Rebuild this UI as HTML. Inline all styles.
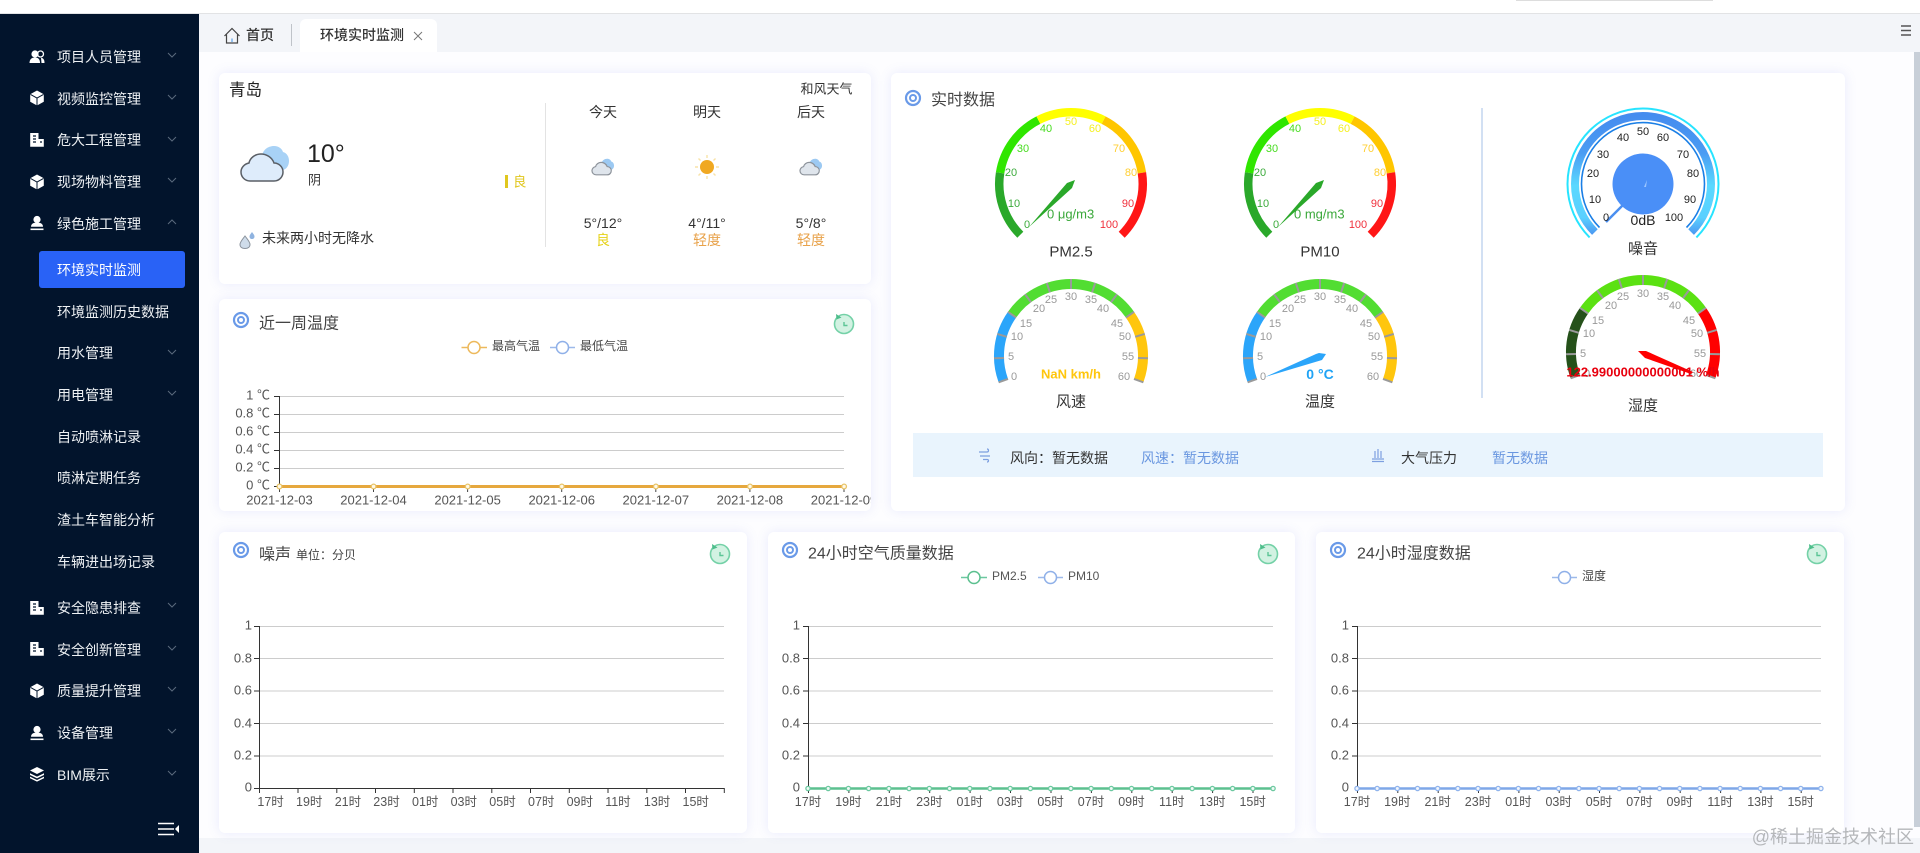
<!DOCTYPE html>
<html lang="zh-CN">
<head>
<meta charset="utf-8">
<title>环境实时监测</title>
<style>
html,body{margin:0;padding:0;width:1920px;height:853px;overflow:hidden;background:#fff}
.a{position:absolute}
.card{position:absolute;background:#fff;border-radius:6px;box-shadow:0 0 12px rgba(90,110,230,.13)}
svg{position:absolute;left:0;top:0;font-family:"Liberation Sans","Noto Sans CJK SC",sans-serif}
text{dominant-baseline:central}
.s text{font-size:14px;fill:#eef1f4}
.m{text-anchor:middle}
.e{text-anchor:end}
.t{font-size:16px;fill:#444}
.yl text{font-size:13px;fill:#555;text-anchor:end}
.xl text{font-size:12.5px;fill:#555}
.grid{stroke:#ccc;stroke-width:1}
.ax{stroke:#333;stroke-width:1;fill:none}
.g12 text{font-size:11px;text-anchor:middle}
.gw text{font-size:11px;text-anchor:middle;fill:#999}
</style>
</head>
<body>
<div class="a" style="left:0;top:0;width:1920px;height:13px;background:#fff"></div>
<div class="a" style="left:1516px;top:0;width:197px;height:1px;background:#ddd"></div>
<div class="a" style="left:0;top:13px;width:1920px;height:1px;background:#e2e3e5"></div>
<div class="a" style="left:199px;top:14px;width:1721px;height:38px;background:#f3f5f9"></div>
<div class="a" style="left:199px;top:52px;width:1721px;height:786px;background:#fdfdff"></div>
<div class="a" style="left:199px;top:838px;width:1721px;height:15px;background:#f3f5f9"></div>
<div class="a" style="left:0;top:14px;width:199px;height:839px;background:#02142c"></div>
<div class="a" style="left:300px;top:19px;width:137px;height:33px;background:#fff;border-radius:6px 6px 0 0"></div>
<div class="a" style="left:39px;top:251px;width:146px;height:37px;background:#2962f6;border-radius:3px"></div>
<div class="a" style="left:1914px;top:52px;width:6px;height:775px;background:#c8cfd8"></div>
<div class="card" style="left:219px;top:73px;width:652px;height:211px"></div>
<div class="card" style="left:219px;top:299px;width:652px;height:212px"></div>
<div class="card" style="left:891px;top:73px;width:954px;height:438px"></div>
<div class="card" style="left:219px;top:532px;width:528px;height:301px"></div>
<div class="card" style="left:768px;top:532px;width:527px;height:301px"></div>
<div class="card" style="left:1316px;top:532px;width:528px;height:301px"></div>

<svg width="1920" height="853" viewBox="0 0 1920 853" xmlns="http://www.w3.org/2000/svg">
<defs>
<g id="cube"><path d="M0 -7.5L6.8 -3.8V3.8L0 7.5L-6.8 3.8V-3.8Z" fill="#fff"/><path d="M-6.5 -3.6L0 0L6.5 -3.6M0 0V7.5" stroke="#02142c" stroke-width="1" fill="none"/></g>
<g id="bld"><path d="M-6.8 -7H1.5V-1H6.8V6.8H-6.8Z" fill="#fff"/><path d="M-4 -4H-1M-4 -1H-1M-4 2H-1M3 2H5" stroke="#02142c" stroke-width="1.2"/></g>
<g id="person"><circle cx="0" cy="-3.5" r="3.6" fill="#fff"/><path d="M-6 3.8C-6 0.5 -3 -.5 0 -.5C3 -.5 6 .5 6 3.8Z" fill="#fff"/><path d="M-6.5 6.3H6.5" stroke="#fff" stroke-width="1.6"/></g>
<g id="people"><circle cx="-2" cy="-3" r="3.6" fill="#fff"/><path d="M-7.5 6C-7.5 2 -5 .5 -2 .5C1 .5 3 2 3 6Z" fill="#fff"/><circle cx="3.5" cy="-3" r="3" fill="none" stroke="#fff" stroke-width="1.3"/><path d="M4 .8C6.5 1.2 7.5 3 7.5 6H4.5" fill="#fff"/></g>
<g id="layers"><path d="M0 -7L7 -3.5L0 0L-7 -3.5Z" fill="#fff"/><path d="M-7 -.8L0 2.6L7 -.8V1L0 4.4L-7 1Z" fill="#fff"/><path d="M-7 2.6L0 6L7 2.6V4.2L0 7.6L-7 4.2Z" fill="#fff"/></g>
<g id="ring"><circle r="7" fill="none" stroke="#6a9ae8" stroke-width="2.2"/><circle r="3" fill="none" stroke="#6a9ae8" stroke-width="2"/></g>
<g id="rf"><circle r="9.5" fill="#d2f2e2" stroke="#74d1a7" stroke-width="1.6"/><path d="M-8 -10L-7.5 -4.5L-2.5 -6.5Z" fill="#4dbd8b"/><path d="M0 -2V1.5H3.5" stroke="#5cc596" stroke-width="1.4" fill="none"/></g>
<g id="bigcloud"><path d="M262 156C263 149 269 146 274 146C279 146 282 149 283 152C287 153 289 157 289 161C289 166 286 170 282 170H270Z" fill="#a8d2f6"/><path d="M250 181H274C280 181 283 176 283 172C283 167 279 163 274 163C272 157 266 154 261 154C255 154 250 158 249 163C244 164 241 168 241 172C241 177 245 181 250 181Z" fill="#deecfb" stroke="#5a5f66" stroke-width="1.5"/></g>
<g id="smcloud"><path d="M262 156C263 149 269 146 274 146C279 146 282 149 283 152C287 153 289 157 289 161C289 166 286 170 282 170H270Z" fill="#9cc9f2"/><path d="M250 181H274C280 181 283 176 283 172C283 167 279 163 274 163C272 157 266 154 261 154C255 154 250 158 249 163C244 164 241 168 241 172C241 177 245 181 250 181Z" fill="#dfe5ec" stroke="#8d939b" stroke-width="2.6"/></g>
<g id="wticks" stroke="#9a9a9a" stroke-width="2">
<line x1="67" x2="77" transform="rotate(-200)"/><line x1="67" x2="77" transform="rotate(-181.67)"/><line x1="67" x2="77" transform="rotate(-163.33)"/><line x1="67" x2="77" transform="rotate(-145)"/><line x1="67" x2="77" transform="rotate(-126.67)"/><line x1="67" x2="77" transform="rotate(-108.33)"/><line x1="67" x2="77" transform="rotate(-90)"/><line x1="67" x2="77" transform="rotate(-71.67)"/><line x1="67" x2="77" transform="rotate(-53.33)"/><line x1="67" x2="77" transform="rotate(-35)"/><line x1="67" x2="77" transform="rotate(-16.67)"/><line x1="67" x2="77" transform="rotate(1.67)"/><line x1="67" x2="77" transform="rotate(20)"/>
</g>
<g id="pmarc" fill="none" stroke-width="8.5">
<path d="M-50.7 50.7A71.75 71.75 0 0 1 -70.9 -11.2" stroke="#2aa82a"/>
<path d="M-70.9 -11.2A71.75 71.75 0 0 1 -32.6 -63.9" stroke="#2fe600"/>
<path d="M-32.6 -63.9A71.75 71.75 0 0 1 32.6 -63.9" stroke="#ffff00"/>
<path d="M32.6 -63.9A71.75 71.75 0 0 1 70.9 -11.2" stroke="#ffc600"/>
<path d="M70.9 -11.2A71.75 71.75 0 0 1 50.7 50.7" stroke="#ff1616"/>
</g>
<linearGradient id="bandg" gradientUnits="userSpaceOnUse" x1="0" y1="108" x2="0" y2="237">
<stop offset="0" stop-color="#4489ee"/><stop offset=".35" stop-color="#4a9cf3"/><stop offset=".6" stop-color="#5ad8ff"/><stop offset=".85" stop-color="#5ad0ff"/><stop offset="1" stop-color="#4a8ff0"/>
</linearGradient>
<clipPath id="c1"><rect x="219" y="299" width="652" height="212"/></clipPath>
</defs>

<!-- sidebar -->
<g class="s">
<text x="57" y="57">项目人员管理</text>
<text x="57" y="99">视频监控管理</text>
<text x="57" y="140">危大工程管理</text>
<text x="57" y="182">现场物料管理</text>
<text x="57" y="224">绿色施工管理</text>
<text x="57" y="270" style="fill:#fff">环境实时监测</text>
<text x="57" y="312">环境监测历史数据</text>
<text x="57" y="353">用水管理</text>
<text x="57" y="395">用电管理</text>
<text x="57" y="437">自动喷淋记录</text>
<text x="57" y="478">喷淋定期任务</text>
<text x="57" y="520">渣土车智能分析</text>
<text x="57" y="562">车辆进出场记录</text>
<text x="57" y="608">安全隐患排查</text>
<text x="57" y="650">安全创新管理</text>
<text x="57" y="691">质量提升管理</text>
<text x="57" y="733">设备管理</text>
<text x="57" y="775">BIM展示</text>
</g>
<use href="#people" x="37" y="57"/><use href="#cube" x="37" y="98"/><use href="#bld" x="37" y="140"/><use href="#cube" x="37" y="182"/><use href="#person" x="37" y="223"/>
<use href="#bld" x="37" y="608"/><use href="#bld" x="37" y="649"/><use href="#cube" x="37" y="691"/><use href="#person" x="37" y="733"/><use href="#layers" x="37" y="774"/>
<g fill="none" stroke="#5a6a7d" stroke-width="1">
<path d="M168 53l4 4l4 -4M168 95l4 4l4 -4M168 137l4 4l4 -4M168 178l4 4l4 -4M168 224l4 -4l4 4M168 350l4 4l4 -4M168 391l4 4l4 -4M168 603l4 4l4 -4M168 646l4 4l4 -4M168 687l4 4l4 -4M168 729l4 4l4 -4M168 771l4 4l4 -4"/>
</g>
<path d="M158 823.5H174M158 829H174M158 834.5H174" stroke="#fff" stroke-width="1.6"/>
<path d="M179 825V833L175 829Z" fill="#fff"/>

<!-- tabs -->
<path d="M224.5 36L232 28.5L239.5 36M226.5 34.5V43H237.5V34.5" fill="none" stroke="#444" stroke-width="1.2"/>
<path d="M232 38.5V42" stroke="#3a8ee6" stroke-width="1"/>
<text x="246" y="35" font-size="14" fill="#333" font-weight="500">首页</text>
<path d="M291.5 24V46" stroke="#bfc3c9"/>
<text x="320" y="35" font-size="14" fill="#333" font-weight="500">环境实时监测</text>
<path d="M414 32L422 40M422 32L414 40" stroke="#777" stroke-width="1"/>
<path d="M1901 26H1911M1901 30.5H1911M1901 35H1911" stroke="#555" stroke-width="1.6"/>

<!-- weather -->
<text x="229" y="90.5" font-size="16.5" fill="#222">青岛</text>
<text x="800.5" y="89" font-size="13" fill="#333">和风天气</text>
<path d="M545.5 103V247" stroke="#e3e3e3"/>
<use href="#bigcloud"/>
<text x="307" y="154" font-size="25" fill="#222">10°</text>
<text x="308" y="180" font-size="13" fill="#333">阴</text>
<rect x="505" y="175" width="3" height="13" fill="#e0c71e"/>
<text x="513" y="182" font-size="13.5" fill="#e0c71e">良</text>
<path d="M245 236C242 240 240 242 240 244.5C240 247 242 248.5 245 248.5C248 248.5 250 247 250 244.5C250 242 248 240 245 236Z" fill="#cfdcea" stroke="#8b939d" stroke-width="1"/>
<path d="M252 232C250.5 234 249.5 235 249.5 236.5C249.5 238 250.5 239 252 239C253.5 239 254.5 238 254.5 236.5C254.5 235 253.5 234 252 232Z" fill="#8fb3e0"/>
<text x="262" y="238" font-size="14" fill="#333">未来两小时无降水</text>
<text x="603" y="112" class="m" font-size="14" fill="#333">今天</text>
<text x="707" y="112" class="m" font-size="14" fill="#333">明天</text>
<text x="811" y="112" class="m" font-size="14" fill="#333">后天</text>
<use href="#smcloud" transform="translate(603,167) scale(.46) translate(-265,-164)"/>
<use href="#smcloud" transform="translate(811,167) scale(.46) translate(-265,-164)"/>
<circle cx="707" cy="167" r="7" fill="#f0a821"/>
<g stroke="#f8e3a8" stroke-width="1.4"><path d="M707 155V158M707 176V179M695 167H698M716 167H719M698.5 158.5L700.5 160.5M713.5 173.5L715.5 175.5M698.5 175.5L700.5 173.5M713.5 160.5L715.5 158.5"/></g>
<text x="603" y="223" class="m" font-size="14" fill="#333">5°/12°</text>
<text x="707" y="223" class="m" font-size="14" fill="#333">4°/11°</text>
<text x="811" y="223" class="m" font-size="14" fill="#333">5°/8°</text>
<text x="603" y="240" class="m" font-size="14" fill="#e6d21a">良</text>
<text x="707" y="240" class="m" font-size="14" fill="#e8a24a">轻度</text>
<text x="811" y="240" class="m" font-size="14" fill="#e8a24a">轻度</text>

<!-- week temp -->
<use href="#ring" x="241" y="320"/>
<text x="259" y="324" class="t">近一周温度</text>
<use href="#rf" x="844" y="324"/>
<g fill="none" stroke-width="1.5">
<path d="M461.5 347.5H487" stroke="#edb95c"/><circle cx="474" cy="347.5" r="6" fill="#fff" stroke="#edb95c"/>
<path d="M550 347.5H575" stroke="#9db9ea"/><circle cx="562.5" cy="347.5" r="6" fill="#fff" stroke="#8fb0e8"/>
</g>
<text x="492" y="346" font-size="12" fill="#444">最高气温</text>
<text x="580" y="346" font-size="12" fill="#444">最低气温</text>
<path class="grid" d="M279.5 396.5H844M279.5 414.5H844M279.5 432.5H844M279.5 450.5H844M279.5 468.5H844"/>
<path class="ax" d="M279.5 396V487M274 396.5H279.5M274 414.5H279.5M274 432.5H279.5M274 450.5H279.5M274 468.5H279.5M274 486.5H279.5"/>
<path d="M279.5 487V492M373.5 487V492M467.6 487V492M561.7 487V492M655.8 487V492M749.9 487V492M844 487V492" stroke="#444"/>
<line x1="279.5" y1="486.5" x2="844" y2="486.5" stroke="#e6a83e" stroke-width="3"/>
<line x1="279.5" y1="486.5" x2="844.2" y2="486.5" stroke="#e8c468" stroke-width="6" stroke-linecap="round" stroke-dasharray="0 94.1"/>
<line x1="279.5" y1="486.5" x2="844.2" y2="486.5" stroke="#fff8e6" stroke-width="3.4" stroke-linecap="round" stroke-dasharray="0 94.1"/>
<g class="yl">
<text x="270" y="395">1 ℃</text><text x="270" y="413">0.8 ℃</text><text x="270" y="431">0.6 ℃</text><text x="270" y="449">0.4 ℃</text><text x="270" y="467">0.2 ℃</text><text x="270" y="485">0 ℃</text>
</g>
<g clip-path="url(#c1)" font-size="13" fill="#555" text-anchor="middle">
<text x="279.5" y="500">2021-12-03</text><text x="373.5" y="500">2021-12-04</text><text x="467.6" y="500">2021-12-05</text><text x="561.7" y="500">2021-12-06</text><text x="655.8" y="500">2021-12-07</text><text x="749.9" y="500">2021-12-08</text><text x="844" y="500">2021-12-09</text>
</g>

<!-- realtime -->
<use href="#ring" x="913" y="98"/>
<text x="931" y="100.5" class="t">实时数据</text>
<use href="#pmarc" x="1071" y="184"/>
<use href="#pmarc" x="1320" y="184"/>
<g class="g12">
<g fill="#3cab3c"><text x="1027" y="225">0</text><text x="1014" y="204">10</text><text x="1011" y="173">20</text></g>
<g fill="#47dc1f"><text x="1023" y="149">30</text><text x="1046" y="129">40</text></g>
<g fill="#f5f021"><text x="1071" y="122">50</text><text x="1095" y="129">60</text></g>
<g fill="#ffcf33"><text x="1119" y="149">70</text><text x="1131" y="173">80</text></g>
<g fill="#f0303c"><text x="1128" y="204">90</text><text x="1109" y="225">100</text></g>
<g fill="#3cab3c"><text x="1276" y="225">0</text><text x="1263" y="204">10</text><text x="1260" y="173">20</text></g>
<g fill="#47dc1f"><text x="1272" y="149">30</text><text x="1295" y="129">40</text></g>
<g fill="#f5f021"><text x="1320" y="122">50</text><text x="1344" y="129">60</text></g>
<g fill="#ffcf33"><text x="1368" y="149">70</text><text x="1380" y="173">80</text></g>
<g fill="#f0303c"><text x="1377" y="204">90</text><text x="1358" y="225">100</text></g>
</g>
<polygon points="1029,227 1067,183 1075,180 1072,188" fill="#2aa82a"/>
<polygon points="1278,227 1316,183 1324,180 1321,188" fill="#2aa82a"/>
<text x="1047" y="214" font-size="13" fill="#3aa83a" font-weight="500">0 μg/m3</text>
<text x="1294" y="214" font-size="13" fill="#3aa83a" font-weight="500">0 mg/m3</text>
<text x="1071" y="252" class="m" font-size="15" fill="#333">PM2.5</text>
<text x="1320" y="252" class="m" font-size="15" fill="#333">PM10</text>

<!-- wind -->
<g fill="none" stroke-width="10" transform="translate(1071,356)">
<path d="M-67.7 24.6A72 72 0 0 1 -59 -41.3" stroke="#2ba5fa"/>
<path d="M-59 -41.3A72 72 0 0 1 59 -41.3" stroke="#52dd32"/>
<path d="M59 -41.3A72 72 0 0 1 67.7 24.6" stroke="#ffc60d"/>
</g>
<use href="#wticks" x="1071" y="356"/>
<g class="gw">
<text x="1014" y="377">0</text><text x="1011" y="357">5</text><text x="1017" y="337">10</text><text x="1026" y="324">15</text><text x="1039" y="309">20</text><text x="1051" y="300">25</text><text x="1071" y="297">30</text><text x="1091" y="300">35</text><text x="1103" y="309">40</text><text x="1117" y="324">45</text><text x="1125" y="337">50</text><text x="1128" y="357">55</text><text x="1124" y="377">60</text>
</g>
<text x="1071" y="374" class="m" font-size="13" font-weight="700" fill="#ffc60d">NaN km/h</text>
<text x="1071" y="402" class="m" font-size="15" fill="#333">风速</text>

<!-- temp -->
<g fill="none" stroke-width="10" transform="translate(1320,356)">
<path d="M-67.7 24.6A72 72 0 0 1 -59 -41.3" stroke="#2ba5fa"/>
<path d="M-59 -41.3A72 72 0 0 1 59 -41.3" stroke="#52dd32"/>
<path d="M59 -41.3A72 72 0 0 1 67.7 24.6" stroke="#ffc60d"/>
</g>
<use href="#wticks" x="1320" y="356"/>
<g class="gw">
<text x="1263" y="377">0</text><text x="1260" y="357">5</text><text x="1266" y="337">10</text><text x="1275" y="324">15</text><text x="1288" y="309">20</text><text x="1300" y="300">25</text><text x="1320" y="297">30</text><text x="1340" y="300">35</text><text x="1352" y="309">40</text><text x="1366" y="324">45</text><text x="1374" y="337">50</text><text x="1377" y="357">55</text><text x="1373" y="377">60</text>
</g>
<polygon points="1265,377 1316,354 1319,353 1326,354 1322,360" fill="#2ba5fa"/>
<text x="1320" y="374" class="m" font-size="14" font-weight="700" fill="#1fa3f5">0 °C</text>
<text x="1320" y="402" class="m" font-size="15" fill="#333">温度</text>

<!-- divider -->
<rect x="1481" y="108" width="2" height="290" fill="#d2e0f3"/>

<!-- noise -->
<g fill="none">
<path d="M1589.6 237.4A75.5 75.5 0 1 1 1696.4 237.4" stroke="#27e4ff" stroke-width="2"/>
<path d="M1594.9 232.1A68 68 0 1 1 1691.1 232.1" stroke="url(#bandg)" stroke-width="8"/>
<path d="M1599.5 227.5A61.5 61.5 0 1 1 1686.5 227.5" stroke="#1a7fe6" stroke-width="1.6"/>
</g>
<path d="M1606 222L1625 203" stroke="#4a8ff0" stroke-width="2.5"/>
<circle cx="1643" cy="184" r="30.5" fill="#4a8ff7"/>
<path d="M1644 187L1647 180L1646 187Z" fill="#9cc6ff"/>
<g font-size="11" fill="#222" text-anchor="middle">
<text x="1606" y="218">0</text><text x="1595" y="200">10</text><text x="1593" y="174">20</text><text x="1603" y="155">30</text><text x="1623" y="138">40</text><text x="1643" y="132">50</text><text x="1663" y="138">60</text><text x="1683" y="155">70</text><text x="1693" y="174">80</text><text x="1690" y="200">90</text><text x="1674" y="218">100</text>
</g>
<text x="1643" y="220" class="m" font-size="14" fill="#222">0dB</text>
<text x="1643" y="249" class="m" font-size="15" fill="#333">噪音</text>

<!-- humidity -->
<g fill="none" stroke-width="10" transform="translate(1643,352)">
<path d="M-67.7 24.6A72 72 0 0 1 -59 -41.3" stroke="#25511a"/>
<path d="M-59 -41.3A72 72 0 0 1 59 -41.3" stroke="#5be112"/>
<path d="M59 -41.3A72 72 0 0 1 67.7 24.6" stroke="#ff0000"/>
</g>
<use href="#wticks" x="1643" y="352"/>
<g class="gw">
<text x="1587" y="374">0</text><text x="1583" y="354">5</text><text x="1589" y="334">10</text><text x="1598" y="321">15</text><text x="1611" y="306">20</text><text x="1623" y="297">25</text><text x="1643" y="294">30</text><text x="1663" y="297">35</text><text x="1675" y="306">40</text><text x="1689" y="321">45</text><text x="1697" y="334">50</text><text x="1700" y="354">55</text><text x="1696" y="374">60</text>
</g>
<polygon points="1638,351 1646,351 1693,372 1691,374 1645,358" fill="#ff0000"/>
<text x="1643" y="372" class="m" font-size="13" font-weight="700" fill="#e8000e">122.99000000000001 %/h</text>
<text x="1643" y="406" class="m" font-size="15" fill="#333">湿度</text>

<!-- strip -->
<rect x="913" y="433" width="910" height="44" fill="#e9f4fd"/>
<path d="M979 452H987C989 452 989 449 987 449M980 456H990M983 459.5H987C989 459.5 989 462 987 462" fill="none" stroke="#7d9fe0" stroke-width="1.2"/>
<text x="1010" y="458" font-size="14" fill="#333">风向：暂无数据</text>
<text x="1141" y="458" font-size="14" fill="#6a97e0">风速：暂无数据</text>
<path d="M1375 451V458M1378 449V458M1381 451V458M1372 459H1384M1372 461.5H1384" fill="none" stroke="#7d9fe0" stroke-width="1.2"/>
<text x="1401" y="458" font-size="14" fill="#333">大气压力</text>
<text x="1492" y="458" font-size="14" fill="#6a97e0">暂无数据</text>

<!-- noise chart -->
<use href="#ring" x="241" y="550"/>
<text x="259" y="555" class="t">噪声</text>
<text x="296" y="555" font-size="12" fill="#444">单位：分贝</text>
<use href="#rf" x="720" y="554"/>
<path class="grid" d="M259.5 626.5H724M259.5 658.5H724M259.5 691H724M259.5 723.5H724M259.5 756H724"/>
<path class="ax" d="M259.5 626V789M254 626.5H259.5M254 658.5H259.5M254 691H259.5M254 723.5H259.5M254 756H259.5M254 788.5H724.5"/>
<path class="ax" d="M259.5 788V793M298 788V793M336.8 788V793M375.5 788V793M414.3 788V793M453 788V793M491.8 788V793M530.5 788V793M569.3 788V793M608 788V793M646.8 788V793M685.5 788V793M724.3 788V793"/>
<g class="yl"><text x="252" y="625">1</text><text x="252" y="658">0.8</text><text x="252" y="690">0.6</text><text x="252" y="723">0.4</text><text x="252" y="755">0.2</text><text x="252" y="787">0</text></g>
<g class="xl"><text x="257.4" y="802">17时</text><text x="296" y="802">19时</text><text x="334.7" y="802">21时</text><text x="373.3" y="802">23时</text><text x="412" y="802">01时</text><text x="450.6" y="802">03时</text><text x="489.3" y="802">05时</text><text x="528" y="802">07时</text><text x="566.6" y="802">09时</text><text x="605.2" y="802">11时</text><text x="643.9" y="802">13时</text><text x="682.5" y="802">15时</text></g>

<!-- aqi chart -->
<use href="#ring" x="790" y="550"/>
<text x="808" y="554" class="t">24小时空气质量数据</text>
<use href="#rf" x="1268" y="554"/>
<g fill="none" stroke-width="1.5">
<path d="M961 577.5H987" stroke="#6cc8a0"/><circle cx="974" cy="577.5" r="6" fill="#fff" stroke="#5cc08f"/>
<path d="M1038 577.5H1063" stroke="#9db9ea"/><circle cx="1050.5" cy="577.5" r="6" fill="#fff" stroke="#8fb0e8"/>
</g>
<text x="992" y="576" font-size="12" fill="#555">PM2.5</text>
<text x="1068" y="576" font-size="12" fill="#555">PM10</text>
<path class="grid" d="M808.5 626.5H1273M808.5 658.5H1273M808.5 691H1273M808.5 723.5H1273M808.5 756H1273"/>
<path class="ax" d="M808.5 626V789M803 626.5H808.5M803 658.5H808.5M803 691H808.5M803 723.5H808.5M803 756H808.5"/>
<path class="ax" d="M808.5 788V793M848.9 788V793M889.3 788V793M929.7 788V793M970.1 788V793M1010.5 788V793M1051 788V793M1091.4 788V793M1131.8 788V793M1172.2 788V793M1212.6 788V793M1253 788V793"/>
<line x1="808" y1="788.5" x2="1273" y2="788.5" stroke="#5cc08f" stroke-width="2.6"/>
<line x1="808" y1="788.5" x2="1273.2" y2="788.5" stroke="#6cc8a0" stroke-width="5.5" stroke-linecap="round" stroke-dasharray="0 20.22"/>
<line x1="808" y1="788.5" x2="1273.2" y2="788.5" stroke="#eefaf4" stroke-width="3" stroke-linecap="round" stroke-dasharray="0 20.22"/>
<g class="yl"><text x="800" y="625">1</text><text x="800" y="658">0.8</text><text x="800" y="690">0.6</text><text x="800" y="723">0.4</text><text x="800" y="755">0.2</text><text x="800" y="787">0</text></g>
<g class="xl" text-anchor="middle"><text x="808" y="802">17时</text><text x="848.4" y="802">19时</text><text x="888.9" y="802">21时</text><text x="929.3" y="802">23时</text><text x="969.7" y="802">01时</text><text x="1010.1" y="802">03时</text><text x="1050.6" y="802">05时</text><text x="1091" y="802">07时</text><text x="1131.4" y="802">09时</text><text x="1171.8" y="802">11时</text><text x="1212.3" y="802">13时</text><text x="1252.7" y="802">15时</text></g>

<!-- humidity chart -->
<use href="#ring" x="1338" y="550"/>
<text x="1357" y="554" class="t">24小时湿度数据</text>
<use href="#rf" x="1817" y="554"/>
<g fill="none" stroke-width="1.5">
<path d="M1552 577.5H1577" stroke="#9db9ea"/><circle cx="1564.5" cy="577.5" r="6" fill="#fff" stroke="#8fb0e8"/>
</g>
<text x="1582" y="576" font-size="12" fill="#444">湿度</text>
<path class="grid" d="M1357.5 626.5H1821M1357.5 658.5H1821M1357.5 691H1821M1357.5 723.5H1821M1357.5 756H1821"/>
<path class="ax" d="M1357.5 626V789M1352 626.5H1357.5M1352 658.5H1357.5M1352 691H1357.5M1352 723.5H1357.5M1352 756H1357.5"/>
<path class="ax" d="M1357.5 788V793M1397.8 788V793M1438.2 788V793M1478.5 788V793M1518.9 788V793M1559.2 788V793M1599.5 788V793M1639.9 788V793M1680.2 788V793M1720.6 788V793M1760.9 788V793M1801.2 788V793"/>
<line x1="1357" y1="788.5" x2="1821" y2="788.5" stroke="#7ea7e8" stroke-width="2.4"/>
<line x1="1357" y1="788.5" x2="1821.2" y2="788.5" stroke="#8fb3ec" stroke-width="5.5" stroke-linecap="round" stroke-dasharray="0 20.17"/>
<line x1="1357" y1="788.5" x2="1821.2" y2="788.5" stroke="#f0f5fd" stroke-width="3" stroke-linecap="round" stroke-dasharray="0 20.17"/>
<g class="yl"><text x="1349" y="625">1</text><text x="1349" y="658">0.8</text><text x="1349" y="690">0.6</text><text x="1349" y="723">0.4</text><text x="1349" y="755">0.2</text><text x="1349" y="787">0</text></g>
<g class="xl" text-anchor="middle"><text x="1357" y="802">17时</text><text x="1397.3" y="802">19时</text><text x="1437.7" y="802">21时</text><text x="1478" y="802">23时</text><text x="1518.4" y="802">01时</text><text x="1558.7" y="802">03时</text><text x="1599" y="802">05时</text><text x="1639.4" y="802">07时</text><text x="1679.7" y="802">09时</text><text x="1720.1" y="802">11时</text><text x="1760.4" y="802">13时</text><text x="1800.7" y="802">15时</text></g>

<!-- watermark -->
<text x="1914" y="837" class="e" font-size="18" fill="#b5b7ba">@稀土掘金技术社区</text>
</svg>
</body>
</html>
